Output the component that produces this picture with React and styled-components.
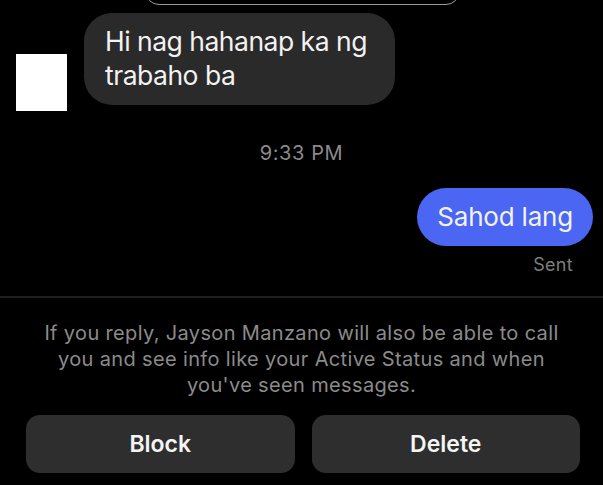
import React from 'react'
import styled, { createGlobalStyle } from 'styled-components'

const GlobalStyle = createGlobalStyle`
  html, body {
    margin: 0;
    padding: 0;
    background: #000;
  }
  body {
    font-family: Inter, "Open Sans", "Liberation Sans", sans-serif;
    -webkit-font-smoothing: antialiased;
  }
`

const Screen = styled.div`
  width: 603px;
  height: 485px;
  overflow: hidden;
  background: #000;
  display: flex;
  flex-direction: column;
`

const TopPill = styled.div`
  margin: -35px 0 0 145px;
  width: 315px;
  height: 40px;
  box-sizing: border-box;
  border: 1px solid #9a9a9a;
  border-radius: 14px;
  flex-shrink: 0;
`

const ReceivedRow = styled.div`
  display: flex;
  align-items: flex-end;
  padding-left: 16px;
  margin-top: 8px;
`

const Avatar = styled.div`
  width: 51px;
  height: 57px;
  background: #fff;
  flex-shrink: 0;
`

const Bubble = styled.div`
  box-sizing: border-box;
  background: ${p => (p.$mine ? '#4a66f3' : '#2a2a2a')};
  color: #f2f2f2;
  font-size: ${p => (p.$mine ? '26px' : '26.5px')};
  line-height: 34px;
  letter-spacing: ${p => (p.$mine ? '-0.2px' : '-0.5px')};
`

const ReceivedBubble = styled(Bubble)`
  width: 311px;
  margin: 0 0 6px 17px;
  padding: 11px 16px 13px 21px;
  border-radius: 28px;
`

const Timestamp = styled.div`
  text-align: center;
  color: #8a8a8a;
  font-size: 20px;
  letter-spacing: 0.6px;
  line-height: 24px;
  margin-top: 30px;
`

const SentRow = styled.div`
  display: flex;
  justify-content: flex-end;
  padding-right: 10px;
  margin-top: 23px;
`

const SentBubble = styled(Bubble)`
  height: 58px;
  padding: 12px 20px 0 20px;
  border-radius: 29px;
`

const Status = styled.div`
  text-align: right;
  padding-right: 30px;
  color: #7e7e7e;
  font-size: 18px;
  letter-spacing: 0.3px;
  line-height: 22px;
  margin-top: 8px;
`

const Divider = styled.div`
  height: 2px;
  background: #1f1f1f;
  margin-top: 20px;
`

const Notice = styled.p`
  margin: 22px 0 0;
  padding: 0 36px;
  text-align: center;
  color: #8b8b8b;
  font-size: 20px;
  letter-spacing: 0.35px;
  line-height: 26px;
`

const Actions = styled.div`
  display: flex;
  gap: 17px;
  padding: 0 23px 0 26px;
  margin-top: 17px;
`

const ActionButton = styled.button`
  flex: 1;
  height: 58px;
  border: none;
  border-radius: 14px;
  background: #2e2e2e;
  color: #f4f4f4;
  font-family: inherit;
  font-size: 23px;
  font-weight: 600;
  padding: 0;
`

export default function App() {
  return (
    <>
      <GlobalStyle />
      <Screen>
        <TopPill />
        <ReceivedRow>
          <Avatar />
          <ReceivedBubble>Hi nag hahanap ka ng trabaho ba</ReceivedBubble>
        </ReceivedRow>
        <Timestamp>9:33 PM</Timestamp>
        <SentRow>
          <SentBubble $mine>Sahod lang</SentBubble>
        </SentRow>
        <Status>Sent</Status>
        <Divider />
        <Notice>
          If you reply, Jayson Manzano will also be able to call you and see info like your Active
          Status and when you've seen messages.
        </Notice>
        <Actions>
          <ActionButton>Block</ActionButton>
          <ActionButton>Delete</ActionButton>
        </Actions>
      </Screen>
    </>
  )
}
